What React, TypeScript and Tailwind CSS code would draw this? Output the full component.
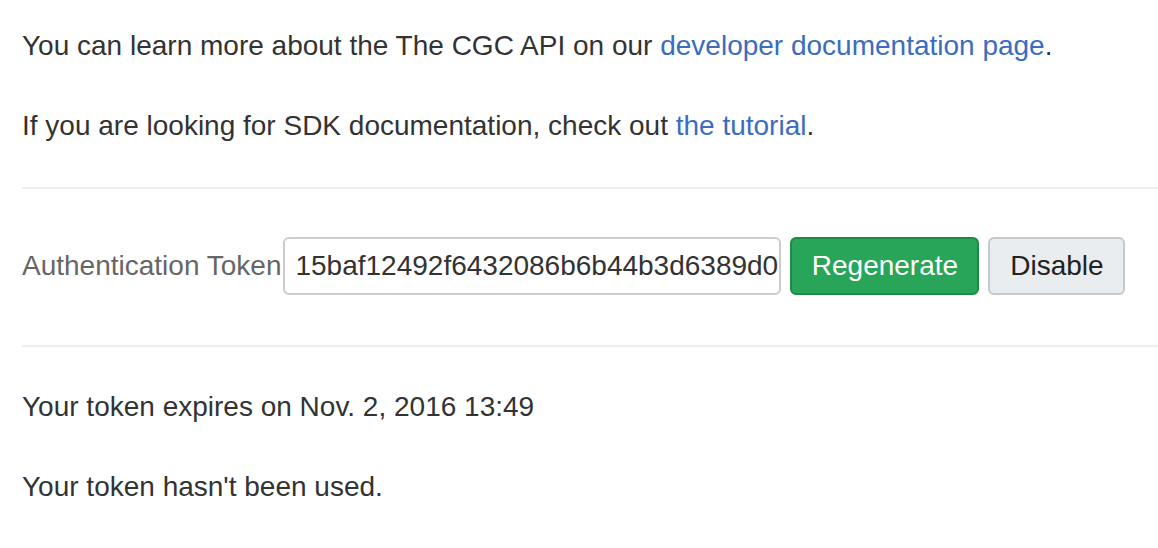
export default function App() {
  return (
    <div
      className="w-[1158px] h-[548px] bg-white pl-[22px] text-[#333] text-[28px] leading-[40px] overflow-hidden"
      style={{ fontFamily: '"Liberation Sans", Arial, sans-serif' }}
    >
      <p className="pt-[26px]">
        You can learn more about the The CGC API on our{" "}
        <a className="text-[#3a6cc0]">developer documentation page</a>.
      </p>
      <p className="mt-[40px]">
        If you are looking for SDK documentation, check out{" "}
        <a className="text-[#3a6cc0]">the tutorial</a>.
      </p>
      <div className="mt-[41px] h-[2px] bg-[#eeeeee]" />
      <div className="flex items-center h-[156px] pb-[2px]">
        <span className="text-[#666]">Authentication Token</span>
        <div className="ml-[2px] w-[498px] h-[58px] border-2 border-[#cccccc] rounded-[6px] flex items-center pl-[10px] overflow-hidden whitespace-nowrap">
          15baf12492f6432086b6b44b3d6389d0
        </div>
        <button className="ml-[9px] w-[189px] h-[58px] rounded-[6px] bg-[#28a558] border-2 border-[#1f8a45] text-white">
          Regenerate
        </button>
        <button className="ml-[9px] w-[137px] h-[58px] rounded-[6px] bg-[#eaedef] border-2 border-[#c6c8ca] text-[#222]">
          Disable
        </button>
      </div>
      <div className="h-[2px] bg-[#eeeeee]" />
      <p className="mt-[40px]">Your token expires on Nov. 2, 2016 13:49</p>
      <p className="mt-[40px]">Your token hasn't been used.</p>
    </div>
  );
}
